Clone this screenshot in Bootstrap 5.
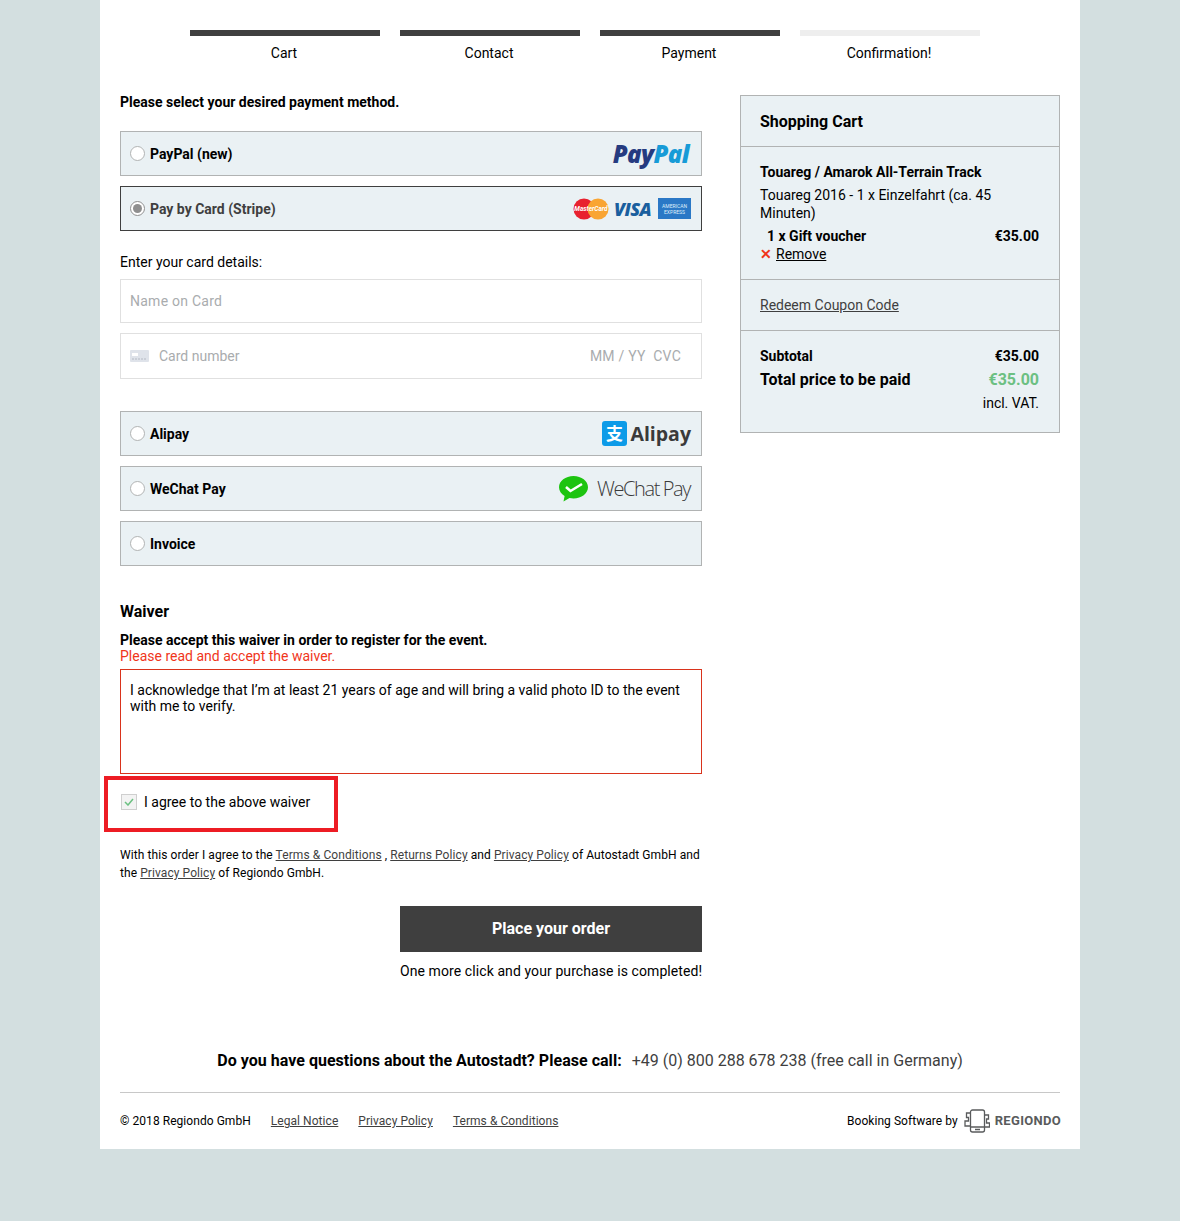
<!DOCTYPE html>
<html lang="en">
<head>
    <meta charset="UTF-8">
    <meta name="viewport" content="width=device-width, initial-scale=1.0">
    <title>Checkout</title>
    <link href="https://cdn.jsdelivr.net/npm/bootstrap@5.3.0/dist/css/bootstrap.min.css" rel="stylesheet">
    <style>
        body {
            font-family: Roboto, "Liberation Sans", sans-serif;
            font-size: 14px;
            line-height: 18px;
            color: #000;
            background-color: #d3dfe0;
            min-height: 1221px;
        }
        a { color: inherit; }
        .page-box {
            width: 980px;
            height: 1149px;
            margin-left: 100px;
            padding: 30px 20px 0;
            background: #fff;
        }
        .steps-row { padding-left: 70px; gap: 20px; height: 63px; }
        .step-item { width: 180px; text-align: center; padding-right: 2px; }
        .step-item:first-child { width: 190px; }
        .step-bar { height: 6px; background: #3f3f3f; margin: 0 -2px 8px 0; }
        .step-bar.todo { background: #eeeeee; }
        .main-col { width: 582px; }
        .side-col { width: 320px; margin: 2px 0 0 38px; }
        .intro-line { margin-bottom: 20px; font-weight: 700; }
        .pay-box {
            height: 45px;
            margin-bottom: 10px;
            padding: 0 10px 0 9px;
            background: #eaf1f4;
            border: 1px solid #b1b3b3;
            font-weight: 700;
        }
        .pay-box.picked { border-color: #3f3f3f; color: #3f3f3f; }
        .radio-dot {
            width: 15px;
            height: 15px;
            margin-right: 5px;
            border: 1px solid #b1b3b3;
            border-radius: 50%;
            background: #fff;
        }
        .picked .radio-dot { border-color: #8f8f8f; }
        .radio-dot i { width: 9px; height: 9px; border-radius: 50%; background: #8f8f8f; }
        .paypal-logo { font: italic 800 24px "Open Sans", sans-serif; letter-spacing: -.6px; color: #253b80; margin-right: 2px; }
        .paypal-logo span { color: #179bd7; }
        .visa-logo { font: italic 800 18px "Open Sans", sans-serif; color: #1a5f9e; letter-spacing: -.6px; margin: 0 7px 0 5px; }
        .amex-logo {
            width: 33px;
            height: 21px;
            background: #2a78c6;
            color: #dfeefa;
            font-size: 5px;
            line-height: 6px;
            text-align: center;
            font-weight: 400;
        }
        .alipay-logo { font: 700 19.500px "Open Sans", sans-serif; color: #3a3a3a; margin-left: 3px; }
        .wechat-logo { font: 300 20px "Open Sans", sans-serif; color: #3a3a3a; letter-spacing: -1.400px; margin: 0 1px 0 9px; }
        .card-label { margin: 22px 0 8px; }
        .field-box {
            height: 44px;
            margin-bottom: 10px;
            padding: 0 20px 0 9px;
            border: 1px solid #e0e0e0;
            color: #a9acae;
        }
        .field-box.tall { height: 46px; margin-bottom: 32px; }
        .wide-text { letter-spacing: .25px; }
        .card-text { margin-left: 2px; }
        .waiver-title { margin: 37px 0 11px; font-size: 16px; line-height: 18px; font-weight: 700; }
        .waiver-lead { line-height: 16px; font-weight: 700; }
        .waiver-error { line-height: 16px; color: #f0351b; margin-bottom: 5px; }
        .waiver-text { height: 105px; padding: 12px 9px; border: 1px solid #d9331c; line-height: 16px; }
        .agree-box {
            width: 234px;
            height: 56px;
            margin: 2px 0 14px -16px;
            padding: 0 0 4px 13px;
            border: 4px solid #ed1c24;
        }
        .check-mark {
            width: 16px;
            height: 16px;
            margin-right: 7px;
            border: 1px solid #cfcfcf;
            background: #f3f3f3;
        }
        .terms-text { font-size: 12px; margin-bottom: 24px; letter-spacing: .08px; }
        .terms-text a, .foot-row a { color: #3f3f3f; }
        .order-col { width: 302px; margin-left: 280px; }
        .order-btn {
            width: 100%;
            height: 46px;
            padding: 0;
            border: 0;
            border-radius: 0;
            background: #3f3f3f;
            color: #fff;
            font-size: 16px;
            font-weight: 700;
        }
        .order-btn:hover { background: #3f3f3f; color: #fff; }
        .order-note { margin-top: 10px; white-space: nowrap; letter-spacing: .09px; }
        .cart-panel { background: #eaf1f4; border: 1px solid #b1b3b3; }
        .cart-part { padding: 0 20px 0 19px; border-bottom: 1px solid #b1b3b3; }
        .cart-part:last-child { border-bottom: 0; }
        .cart-head { height: 51px; padding-top: 2px; font-size: 16px; font-weight: 700; }
        .cart-item { height: 133px; padding-top: 16px; }
        .item-name { margin-bottom: 5px; font-weight: 700; }
        .item-line { margin-top: 5px; padding-left: 7px; font-weight: 700; }
        .cart-coupon { height: 51px; color: #3f3f3f; }
        .cart-sum { height: 101px; padding-top: 16px; }
        .remove-x { color: #f0351b; font-weight: 700; margin-right: 4px; }
        .total-line { font-size: 16px; line-height: 24px; margin: 3px 0 2px; font-weight: 700; }
        .total-price { color: #6cc082; }
        .help-line { margin-top: 72px; font-size: 16px; line-height: 18px; }
        .help-line b { letter-spacing: .03px; }
        .help-line span { color: #3f3f3f; margin-left: 6px; }
        .foot-row { margin-top: 22px; padding-top: 16px; border-top: 1px solid #c8c8c8; font-size: 12px; gap: 20px; letter-spacing: .05px; }
        .foot-brand { margin: 0 -1px 0 -14px; gap: 5px; }
        .brand-name { font-size: 13px; font-weight: 700; color: #595b5c; letter-spacing: .3px; }
    </style>
</head>
<body>
    <div class="page-box">
        <!-- steps -->
        <div class="d-flex steps-row">
            <div class="step-item"><div class="step-bar"></div>Cart</div>
            <div class="step-item"><div class="step-bar"></div>Contact</div>
            <div class="step-item"><div class="step-bar"></div>Payment</div>
            <div class="step-item"><div class="step-bar todo"></div>Confirmation!</div>
        </div>

        <div class="d-flex">
            <div class="main-col">
                <div class="intro-line">Please select your desired payment method.</div>

                <div class="pay-box d-flex align-items-center">
                    <span class="radio-dot"></span>PayPal (new)
                    <span class="paypal-logo ms-auto">Pay<span>Pal</span></span>
                </div>
                <div class="pay-box picked d-flex align-items-center">
                    <span class="radio-dot d-flex align-items-center justify-content-center"><i></i></span>Pay by Card (Stripe)
                    <svg class="ms-auto" width="36" height="22" viewBox="0 0 36 22">
                        <circle cx="11" cy="11" r="10.500" fill="#e8212f"/>
                        <circle cx="25" cy="11" r="10.500" fill="#f9a533"/>
                        <text x="18" y="13" font-family="Roboto" font-size="6.500" font-weight="700" font-style="italic" fill="#fff" text-anchor="middle">MasterCard</text>
                    </svg>
                    <span class="visa-logo">VISA</span>
                    <span class="amex-logo d-flex align-items-center justify-content-center">AMERICAN<br>EXPRESS</span>
                </div>

                <div class="card-label">Enter your card details:</div>
                <div class="field-box d-flex align-items-center"><span class="wide-text">Name on Card</span></div>
                <div class="field-box tall d-flex align-items-center">
                    <svg width="19" height="12" viewBox="0 0 19 12" class="me-2">
                        <rect width="19" height="12" rx="1" fill="#dfe3ea"/>
                        <rect x="2" y="3" width="6" height="3" fill="#fff"/>
                        <path d="M2 9h15" stroke="#b5bac4" stroke-dasharray="2 1"/>
                    </svg>
                    <span class="card-text">Card number</span>
                    <span class="ms-auto wide-text">MM / YY &nbsp;CVC</span>
                </div>

                <div class="pay-box d-flex align-items-center">
                    <span class="radio-dot"></span>Alipay
                    <svg class="ms-auto" width="25" height="25" viewBox="0 0 25 25">
                        <rect width="25" height="25" rx="3" fill="#0d9be8"/>
                        <text x="12.500" y="19" font-family="Noto Sans CJK SC, sans-serif" font-size="17" fill="#fff" text-anchor="middle">支</text>
                    </svg>
                    <span class="alipay-logo">Alipay</span>
                </div>
                <div class="pay-box d-flex align-items-center">
                    <span class="radio-dot"></span>WeChat Pay
                    <svg class="ms-auto" width="29" height="26" viewBox="0 0 29 26">
                        <path d="M14.500 0C6.500 0 0 5 0 11.200c0 3.600 2.200 6.800 5.600 8.800L4.500 25.500l6-3.600c1.300.3 2.600.5 4 .5 8 0 14.500-5 14.500-11.200S22.500 0 14.500 0z" fill="#1dc410"/>
                        <path d="M7 11l4.500 4L23 8" fill="none" stroke="#fff" stroke-width="2.600"/>
                    </svg>
                    <span class="wechat-logo">WeChat Pay</span>
                </div>
                <div class="pay-box d-flex align-items-center">
                    <span class="radio-dot"></span>Invoice
                </div>

                <div class="waiver-title">Waiver</div>
                <div class="waiver-lead">Please accept this waiver in order to register for the event.</div>
                <div class="waiver-error">Please read and accept the waiver.</div>
                <div class="waiver-text">I acknowledge that I’m at least 21 years of age and will bring a valid photo ID to the event with me to verify.</div>

                <div class="agree-box d-flex align-items-center">
                    <span class="check-mark d-flex align-items-center justify-content-center">
                        <svg width="10" height="8" viewBox="0 0 10 8"><path d="M1 4l3 3 5-6" fill="none" stroke="#6cc082" stroke-width="1.500"/></svg>
                    </span>
                    <span>I agree to the above waiver</span>
                </div>

                <div class="terms-text">With this order I agree to the <a href="#">Terms &amp; Conditions</a> , <a href="#">Returns Policy</a> and <a href="#">Privacy Policy</a> of Autostadt GmbH and<br>the <a href="#">Privacy Policy</a> of Regiondo GmbH.</div>

                <div class="order-col">
                    <button type="button" class="btn order-btn">Place your order</button>
                    <div class="order-note">One more click and your purchase is completed!</div>
                </div>
            </div>

            <div class="side-col">
                <div class="cart-panel">
                    <div class="cart-part cart-head d-flex align-items-center">Shopping Cart</div>
                    <div class="cart-part cart-item">
                        <div class="item-name">Touareg / Amarok All-Terrain Track</div>
                        <div>Touareg 2016 - 1 x Einzelfahrt (ca. 45 Minuten)</div>
                        <div class="d-flex justify-content-between item-line"><span>1 x Gift voucher</span><span>€35.00</span></div>
                        <div><span class="remove-x">✕</span><a href="#">Remove</a></div>
                    </div>
                    <div class="cart-part cart-coupon d-flex align-items-center"><a href="#">Redeem Coupon Code</a></div>
                    <div class="cart-part cart-sum">
                        <div class="d-flex justify-content-between fw-bold"><span>Subtotal</span><span>€35.00</span></div>
                        <div class="d-flex justify-content-between total-line"><span>Total price to be paid</span><span class="total-price">€35.00</span></div>
                        <div class="text-end">incl. VAT.</div>
                    </div>
                </div>
            </div>
        </div>

        <div class="help-line text-center"><b>Do you have questions about the Autostadt? Please call:</b> <span>+49 (0) 800 288 678 238 (free call in Germany)</span></div>

        <div class="foot-row d-flex align-items-center">
            <span>© 2018 Regiondo GmbH</span>
            <a href="#">Legal Notice</a>
            <a href="#">Privacy Policy</a>
            <a href="#">Terms &amp; Conditions</a>
            <span class="ms-auto">Booking Software by</span>
            <span class="foot-brand d-flex align-items-center">
                <svg width="26" height="24" viewBox="0 0 26 24" fill="none" stroke="#595b5c" stroke-width="1.300">
                    <rect x="6.500" y="1" width="14" height="22" rx="2"/>
                    <path d="M6.500 18h14M11 20.500h5M6.500 4H2.500v4.500h2v3.500H1v5h5.500M20.500 6h4v4h-2v4h3v4h-5"/>
                </svg>
                <span class="brand-name">REGIONDO</span>
            </span>
        </div>
    </div>
</body>
</html>
